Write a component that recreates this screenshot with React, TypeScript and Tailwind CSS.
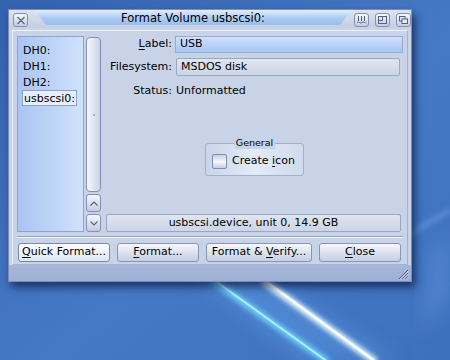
import React from 'react'

const font = "font-['DejaVu_Sans','Liberation_Sans',sans-serif]"

function Gadget({ children, className = '' }: { children: React.ReactNode; className?: string }) {
  return (
    <div
      className={`w-[15px] h-[14px] rounded-[3px] border border-[#8391b6] bg-linear-to-b from-[#f4f7fc] to-[#c3cde2] flex items-center justify-center ${className}`}
    >
      {children}
    </div>
  )
}

function Wallpaper() {
  return (
    <svg className="absolute inset-0" width="450" height="360" viewBox="0 0 450 360">
      <defs>
        <linearGradient id="bg" x1="0" y1="0" x2="1" y2="1">
          <stop offset="0" stopColor="#3462b0" />
          <stop offset="0.55" stopColor="#4579c6" />
          <stop offset="1" stopColor="#3d70bd" />
        </linearGradient>
        <filter id="blur" x="-20%" y="-20%" width="140%" height="140%">
          <feGaussianBlur stdDeviation="2.5" />
        </filter>
        <filter id="blur2" x="-20%" y="-20%" width="140%" height="140%">
          <feGaussianBlur stdDeviation="9" />
        </filter>
      </defs>
      <rect width="450" height="360" fill="url(#bg)" />
      <path d="M190 270 L300 360 L400 360 L250 270 Z" fill="#5a96e0" opacity="0.5" filter="url(#blur2)" />
      <path d="M430 250 L450 235 L450 300 L420 330 Z" fill="#5f93d6" opacity="0.5" filter="url(#blur2)" />
      <line x1="212" y1="280" x2="328" y2="362" stroke="#6fd8ff" strokeWidth="7" opacity="0.9" filter="url(#blur)" />
      <line x1="214" y1="280" x2="328" y2="362" stroke="#b6f2ff" strokeWidth="2" opacity="0.9" />
      <line x1="262" y1="280" x2="376" y2="362" stroke="#e6fbff" strokeWidth="7" filter="url(#blur)" />
      <line x1="264" y1="280" x2="376" y2="362" stroke="#ffffff" strokeWidth="2.5" opacity="0.9" />
      <line x1="400" y1="240" x2="450" y2="210" stroke="#6fa0dd" strokeWidth="6" opacity="0.5" filter="url(#blur)" />
    </svg>
  )
}

function U({ children }: { children: React.ReactNode }) {
  return <span className="underline underline-offset-2">{children}</span>
}

function Button({ w, children, focused = false }: { w: string; children: React.ReactNode; focused?: boolean }) {
  return (
    <div
      className={`${w} h-[19px] rounded-[3px] border flex items-center justify-center text-[11px] text-black ${
        focused
          ? 'border-[#7a88ac] bg-linear-to-b from-[#fbfcff] to-[#dfe6f3]'
          : 'border-[#8795b8] bg-linear-to-b from-[#f6f8fc] to-[#c4cee3]'
      }`}
    >
      <span>{children}</span>
    </div>
  )
}

export default function App() {
  const drives = ['DH0:', 'DH1:', 'DH2:', 'usbscsi0:']

  return (
    <div className={`relative w-[450px] h-[360px] overflow-hidden ${font}`}>
      <Wallpaper />

      <div className="relative ml-[8px] mt-[9px] w-[404px] h-[273px] flex flex-col bg-[#c8d3e8] border border-[#7d8db5] shadow-[3px_5px_8px_rgba(5,15,50,0.65)]">
        {/* Title bar */}
        <div className="h-[17px] flex items-start bg-linear-to-b from-[#dde4f0] to-[#c5cfe3]">
          <Gadget className="ml-[4px] mt-[3px] w-[14px] h-[13px]">
            <svg width="10" height="9" viewBox="0 0 10 9">
              <path d="M1.5 1 L8.5 8 M8.5 1 L1.5 8" stroke="#55607e" strokeWidth="1.1" />
            </svg>
          </Gadget>
          <div className="ml-[6px] w-[318px] h-[15px] flex items-center justify-center bg-linear-to-b from-[#e4efff] via-[#aecdf4] to-[#98bdf0] [clip-path:polygon(0_0,100%_0,calc(100%-12px)_100%,12px_100%)]">
            <span className="text-[11.5px] text-black leading-none mt-[3px]">Format Volume usbscsi0:</span>
          </div>
          <div className="ml-[2px] mt-[3px] flex gap-[6px]">
            <Gadget>
              <svg width="11" height="10" viewBox="0 0 11 10">
                <path d="M2.5 1 V6 M5.5 1 V6 M8.5 1 V6" stroke="#55607e" strokeWidth="1" />
                <path d="M1 7.5 Q2.25 6.5 3.5 7.5 T6 7.5 T8.5 7.5 T10 7.5" stroke="#55607e" strokeWidth="0.9" fill="none" />
              </svg>
            </Gadget>
            <Gadget>
              <svg width="11" height="10" viewBox="0 0 11 10">
                <rect x="1.5" y="1.5" width="8" height="7" fill="none" stroke="#55607e" strokeWidth="1" />
                <path d="M5.5 1.5 V5.5 H1.5" stroke="#55607e" strokeWidth="1" fill="none" />
              </svg>
            </Gadget>
            <Gadget>
              <svg width="11" height="10" viewBox="0 0 11 10">
                <rect x="1.5" y="1.5" width="5.5" height="4.5" fill="none" stroke="#55607e" strokeWidth="1" />
                <rect x="4" y="4" width="5.5" height="4.5" fill="#e8edf7" stroke="#55607e" strokeWidth="1" />
              </svg>
            </Gadget>
          </div>
        </div>

        {/* Inner panel */}
        <div className="mx-[3px] mt-[3px] h-[235px] flex flex-col border border-t-[#eef2f9] border-l-[#eef2f9] border-r-[#a5b3cf] border-b-[#a5b3cf] px-[4px] pt-[5px]">
          <div className="h-[196px] flex">
            {/* Drive list */}
            <div className="w-[67px] h-full border border-[#8ea4cc] bg-linear-to-r from-[#a9c5f3] to-[#d0e2fc] pt-[5px] pl-[5px] flex flex-col">
              {drives.map((d, i) =>
                i === drives.length - 1 ? (
                  <div key={d} className="h-[16px] flex items-center">
                    <span className="h-[16px] px-[1px] -ml-[1px] flex items-center bg-[#e6effc] border border-[#8fa3c9] text-[11px] text-black leading-none">
                      {d}
                    </span>
                  </div>
                ) : (
                  <div key={d} className="h-[16px] flex items-center text-[11px] text-black leading-none">
                    {d}
                  </div>
                )
              )}
            </div>

            {/* Scroller */}
            <div className="ml-[2px] w-[15px] flex flex-col gap-[2px] pt-[1px]">
              <div className="h-[157px] rounded-[4px] border border-[#8190b6] bg-linear-to-r from-[#f7f9fd] to-[#c9d3e8] flex items-center justify-center">
                <div className="w-[2px] h-[2px] rounded-full bg-[#8d9abb]" />
              </div>
              <Gadget className="h-[18px] rounded-[2px]">
                <svg width="10" height="7" viewBox="0 0 10 7">
                  <path d="M1.5 5.5 L5 2 L8.5 5.5" stroke="#55607e" strokeWidth="1.1" fill="none" />
                </svg>
              </Gadget>
              <Gadget className="h-[18px] rounded-[2px]">
                <svg width="10" height="7" viewBox="0 0 10 7">
                  <path d="M1.5 1.5 L5 5 L8.5 1.5" stroke="#55607e" strokeWidth="1.1" fill="none" />
                </svg>
              </Gadget>
            </div>

            {/* Right pane */}
            <div className="ml-[5px] flex-1 flex flex-col text-[11px] text-black">
              <div className="h-[17px] flex items-center">
                <div className="w-[66px] text-right">
                  <U>L</U>abel:
                </div>
                <div className="ml-[3px] flex-1 h-[17px] border border-[#97acd0] bg-linear-to-b from-[#cfe0fb] to-[#a8c6f3] flex items-center pl-[4px]">
                  USB
                </div>
              </div>
              <div className="mt-[5px] h-[18px] flex items-center">
                <div className="w-[66px] text-right">Filesystem:</div>
                <div className="ml-[4px] mr-[3px] flex-1 h-[18px] rounded-[2px] border border-[#9aa7c3] bg-linear-to-b from-[#dfe5f0] to-[#ccd5e6] flex items-center pl-[4px]">
                  MSDOS disk
                </div>
              </div>
              <div className="mt-[7px] h-[16px] flex items-center">
                <div className="w-[66px] text-right">Status:</div>
                <div className="ml-[4px]">Unformatted</div>
              </div>

              <div className="relative mt-[44px] mx-auto w-[99px] h-[33px] rounded-[3px] border border-[#a3b0cb] bg-linear-to-r from-[#c9d5ea] via-[#e3ebf8] to-[#cfdaed] flex items-center pl-[6px] pt-[3px]">
                <div className="absolute -top-[7px] left-1/2 -translate-x-1/2 px-[2px] bg-[#c8d3e8] text-[9.5px] leading-[12px]">
                  General
                </div>
                <div className="w-[15px] h-[15px] rounded-[2px] border border-[#7e8db2] bg-linear-to-b from-[#c5d0e6] via-[#f5f8fd] to-[#c5d0e6]" />
                <div className="ml-[5px]">
                  Create <U>i</U>con
                </div>
              </div>

              <div className="mt-auto mr-[2px] h-[18px] rounded-[2px] border border-[#9aa7c3] bg-linear-to-b from-[#dfe5f0] to-[#ccd5e6] flex items-center justify-center">
                usbscsi.device, unit 0, 14.9 GB
              </div>
            </div>
          </div>

          {/* Separator */}
          <div className="mt-[4px] h-[2px] border-t border-t-[#97a5c3] border-b border-b-[#eef2f9]" />

          {/* Buttons */}
          <div className="mt-[5px] ml-[1px] flex gap-[7px]">
            <Button w="w-[92px]" focused>
              <U>Q</U>uick Format...
            </Button>
            <Button w="w-[82px]">
              <U>F</U>ormat...
            </Button>
            <Button w="w-[106px]">
              Format &amp; <U>V</U>erify...
            </Button>
            <Button w="w-[82px]">
              <U>C</U>lose
            </Button>
          </div>
        </div>

        {/* Bottom border with size gadget */}
        <div className="h-[16px] bg-linear-to-b from-[#a7b7da] to-[#9eafd5] flex items-end justify-end pr-[2px] pb-[1px]">
          <svg width="11" height="11" viewBox="0 0 11 11">
            <path d="M1 10 L10 1 M4 10 L10 4 M7 10 L10 7" stroke="#4f5b7c" strokeWidth="1" />
            <path d="M2 10.5 L10.5 2 M5 10.5 L10.5 5 M8 10.5 L10.5 8" stroke="#eef2fb" strokeWidth="0.7" />
          </svg>
        </div>
      </div>
    </div>
  )
}
